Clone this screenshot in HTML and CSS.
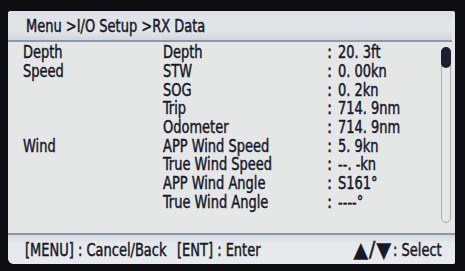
FILE: index.html
```html
<!DOCTYPE html>
<html lang="en">
<head>
    <meta charset="UTF-8">
    <title>RX Data</title>
    <link rel="stylesheet" href="styles.css">
</head>
<body>
    <div class="screen">
        <!-- Ruta del menu -->
        <div class="title"><span class="txt">Menu &gt;I/O Setup &gt;RX Data</span></div>

        <div class="content">
            <div class="list">
                <div class="row"><span class="cat"><span class="txt">Depth</span></span><span class="name"><span class="txt">Depth</span></span><span class="sep">:</span><span class="val"><span class="txt">20. 3ft</span></span></div>
                <div class="row"><span class="cat"><span class="txt">Speed</span></span><span class="name"><span class="txt">STW</span></span><span class="sep">:</span><span class="val"><span class="txt">0. 00kn</span></span></div>
                <div class="row"><span class="cat"></span><span class="name"><span class="txt">SOG</span></span><span class="sep">:</span><span class="val"><span class="txt">0. 2kn</span></span></div>
                <div class="row"><span class="cat"></span><span class="name"><span class="txt">Trip</span></span><span class="sep">:</span><span class="val"><span class="txt">714. 9nm</span></span></div>
                <div class="row"><span class="cat"></span><span class="name"><span class="txt">Odometer</span></span><span class="sep">:</span><span class="val"><span class="txt">714. 9nm</span></span></div>
                <div class="row"><span class="cat"><span class="txt">Wind</span></span><span class="name"><span class="txt">APP Wind Speed</span></span><span class="sep">:</span><span class="val"><span class="txt">5. 9kn</span></span></div>
                <div class="row"><span class="cat"></span><span class="name"><span class="txt">True Wind Speed</span></span><span class="sep">:</span><span class="val"><span class="txt">--. -kn</span></span></div>
                <div class="row"><span class="cat"></span><span class="name"><span class="txt">APP Wind Angle</span></span><span class="sep">:</span><span class="val"><span class="txt">S161°</span></span></div>
                <div class="row"><span class="cat"></span><span class="name"><span class="txt">True Wind Angle</span></span><span class="sep">:</span><span class="val"><span class="txt">----°</span></span></div>
            </div>
            <!-- Barra de desplazamiento -->
            <div class="scroll">
                <div class="thumb"></div>
            </div>
        </div>

        <div class="footer">
            <span class="key menu"><span class="txt">[MENU] : Cancel/Back</span></span>
            <span class="key"><span class="txt">[ENT] : Enter</span></span>
            <span class="key right"><span class="arrows">▲/▼</span><span class="txt">: Select</span></span>
        </div>
    </div>
</body>
</html>
```

FILE: styles.css
```css
* {
    margin: 0;
    padding: 0;
    box-sizing: border-box;
}

body {
    background-color: #0e0e12;
    width: 465px;
    height: 271px;
    overflow: hidden;
    font-family: 'DejaVu Sans Condensed', 'DejaVu Sans', sans-serif;
    font-stretch: condensed;
    color: #161928;
    -webkit-text-stroke: 0.45px #161928;
}

.screen {
    margin: 11px 10px 0 8px;
    width: 447px;
    height: 253px;
    background-color: #e5e7e7;
    border-radius: 3px 2px 2px 6px;
    display: flex;
    flex-direction: column;
    overflow: hidden;
}

/* texto estrecho tipo LCD */
.txt {
    display: inline-block;
    white-space: pre;
    transform: scaleX(0.85);
    transform-origin: left center;
}

.title {
    height: 31px;
    padding: 5px 0 0 18px;
    font-size: 17px;
    background: linear-gradient(to bottom, #dde1e6 0%, #e2e5e8 70%, #cfd6de 100%);
    border-bottom: 2px solid #8d98a6;
    margin-right: 3px;
}

.content {
    flex: 1;
    display: flex;
}

.list {
    flex: 1;
    padding-top: 1px;
}

.row {
    display: flex;
    height: 18.7px;
    align-items: center;
    font-size: 17px;
}

.cat {
    width: 155px;
    padding-left: 15px;
}

.name {
    width: 164px;
}

.sep {
    width: 11px;
}

.scroll {
    width: 10px;
    height: 176px;
    margin: 5px 4px 0 0;
    border: 1px solid #a9adb2;
    border-radius: 5px;
    position: relative;
}

.thumb {
    position: absolute;
    top: -1px;
    left: -1px;
    width: 10px;
    height: 21px;
    border-radius: 5px;
    background-color: #1b1f2e;
}

.footer {
    height: 31px;
    border-top: 2px solid #8d98a6;
    background: linear-gradient(to bottom, #d3d9df 0%, #e6e9ec 30%, #e8ebee 100%);
    display: flex;
    align-items: center;
    padding: 0 11px 0 17px;
    font-size: 17px;
}

.menu {
    width: 152px;
}

.right {
    margin-left: auto;
    display: flex;
    align-items: center;
}

.arrows {
    font-size: 21px;
    letter-spacing: 1px;
    margin-right: 1px;
}

.right .txt {
    width: 51px;
}
```
